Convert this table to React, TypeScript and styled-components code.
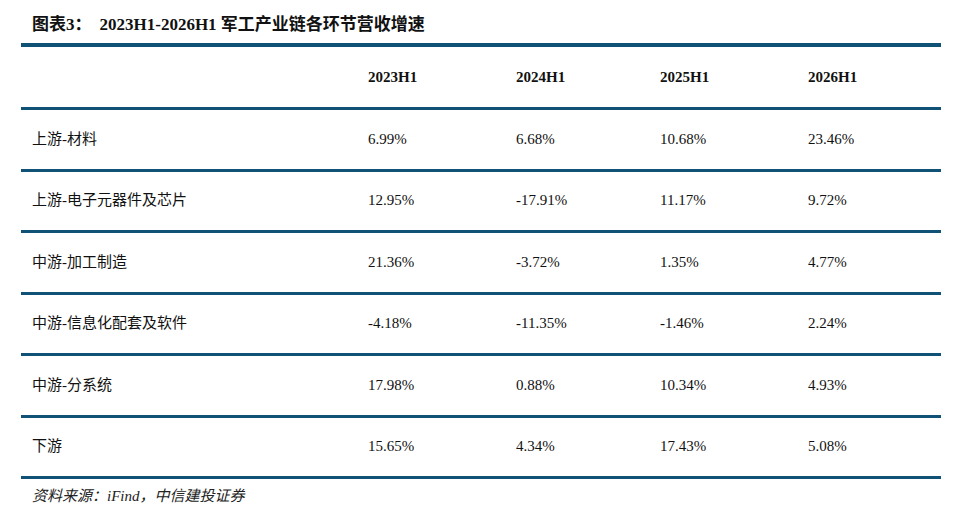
import React from "react";
import styled, { createGlobalStyle } from "styled-components";

const Global = createGlobalStyle`
  html, body { margin: 0; padding: 0; background: #ffffff; }
  body { font-family: "Liberation Serif", "Noto Sans CJK SC", serif; color: #111; }
`;

const LINE = "#0f5276";

const Page = styled.div`
  width: 969px;
  height: 519px;
  padding-left: 21px;
  box-sizing: border-box;
`;

const Figure = styled.div`
  width: 920px;
  display: flex;
  flex-direction: column;
`;

const Title = styled.div`
  height: 43px;
  display: flex;
  align-items: center;
  padding: 0 0 0 11px;
  box-sizing: border-box;
  font-weight: bold;
  font-size: 17px;
  color: #111;
  padding-top: 1px;
`;

const TitleLabel = styled.span`
  margin-right: 8px;
`;

const Table = styled.div`
  border-top: 4px solid ${LINE};
  display: flex;
  flex-direction: column;
`;

const Row = styled.div<{ $head?: boolean }>`
  display: grid;
  grid-template-columns: 336px 148px 144px 148px 1fr;
  align-items: center;
  height: ${(p) => (p.$head ? "60px" : "58.5px")};
  border-bottom: 3px solid ${LINE};
  padding-left: 11px;
  font-size: 15px;
  font-weight: ${(p) => (p.$head ? "bold" : "normal")};
  color: #111;
`;

const Cell = styled.div`
  white-space: nowrap;
  line-height: 1;
`;

const Label = styled(Cell)`
  font-family: "Liberation Serif", "Noto Sans CJK SC", sans-serif;
`;

const Source = styled.div`
  padding-left: 11px;
  height: 30px;
  display: flex;
  align-items: center;
  font-style: italic;
  font-size: 15px;
  color: #222;
`;

const years = ["2023H1", "2024H1", "2025H1", "2026H1"];

const rows: [string, string[]][] = [
  ["上游-材料", ["6.99%", "6.68%", "10.68%", "23.46%"]],
  ["上游-电子元器件及芯片", ["12.95%", "-17.91%", "11.17%", "9.72%"]],
  ["中游-加工制造", ["21.36%", "-3.72%", "1.35%", "4.77%"]],
  ["中游-信息化配套及软件", ["-4.18%", "-11.35%", "-1.46%", "2.24%"]],
  ["中游-分系统", ["17.98%", "0.88%", "10.34%", "4.93%"]],
  ["下游", ["15.65%", "4.34%", "17.43%", "5.08%"]],
];

export default function App() {
  return (
    <Page>
      <Global />
      <Figure>
        <Title>
          <TitleLabel>图表3：</TitleLabel>
          <span>2023H1-2026H1 军工产业链各环节营收增速</span>
        </Title>
        <Table>
          <Row $head>
            <Cell />
            {years.map((y) => (
              <Cell key={y}>{y}</Cell>
            ))}
          </Row>
          {rows.map(([name, vals]) => (
            <Row key={name}>
              <Label>{name}</Label>
              {vals.map((v, i) => (
                <Cell key={i}>{v}</Cell>
              ))}
            </Row>
          ))}
        </Table>
        <Source>资料来源：iFind，中信建投证券</Source>
      </Figure>
    </Page>
  );
}
